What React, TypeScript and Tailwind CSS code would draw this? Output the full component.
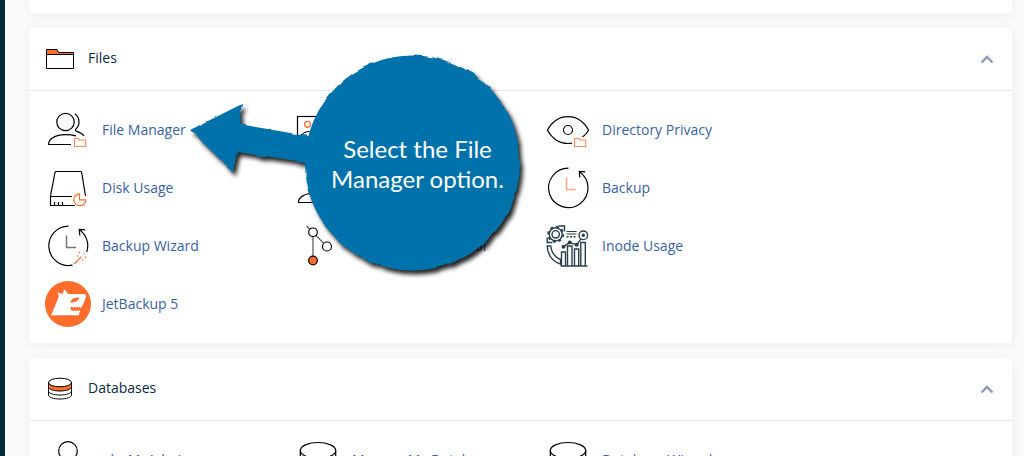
import { useState, type ComponentType, type ReactNode } from 'react';

interface Tool {
  label: string;
  icon: ComponentType;
}

interface SectionProps {
  title: string;
  icon: ReactNode;
  tools: Tool[];
}

function Glyph({ children }: { children: ReactNode }) {
  return (
    <svg viewBox="0 0 48 48" className="size-12 shrink-0" fill="none" stroke="#000" strokeWidth="1.2" aria-hidden="true">
      {children}
    </svg>
  );
}

const MINI_FOLDER = 'M30.5 32.5h4l1.2 1.5h6v6.5H30.5z';

function FileManagerIcon() {
  return (
    <Glyph>
      <circle cx="21.5" cy="16" r="8.7" />
      <path d="M27 38.5H4.7c-.5-5 5.8-9.8 16.8-9.8 4 0 7.5.4 10.5 1.2M31 7.8c5.2 4.2 5.2 11.2.8 15.4-.5.7-.3 1.6.5 1.9 3.5 1.2 6.2 2.8 7.7 4.7" />
      <path d={MINI_FOLDER} stroke="#ff8a57" />
    </Glyph>
  );
}

function ImagesIcon() {
  return (
    <Glyph>
      <rect x="3.5" y="10.5" width="40" height="28" />
      <circle cx="13.5" cy="18.3" r="3" stroke="#ff6c2c" />
      <path d="M4 32c4-4 7-6.500 10-6.500s6 3 9 6l7-8 13 9" />
    </Glyph>
  );
}

function DirectoryPrivacyIcon() {
  return (
    <Glyph>
      <path d="M28 37.200c-1.300.2-2.600.3-4 .3-8.500 0-16-5.500-20.600-13.300C8 16 15.500 10.700 24 10.700S40 16 44.600 24.200c-1.700 2.700-3.700 5-6 6.800" />
      <circle cx="24" cy="24" r="4.5" />
      <path d={MINI_FOLDER} stroke="#ff8a57" />
    </Glyph>
  );
}

function DiskUsageIcon() {
  return (
    <Glyph>
      <path d="M31 41.5H6.5V32L11 8.500q.3-1 1.200-1H36.500q1 0 1.200 1L41.500 32M6.500 32.500H28M10.500 38v3.500M14.500 38v3.500M18.500 38v3.500" />
      <path d="M35.5 29.800a6 6 0 1 0 6.300 6h-6.300z" stroke="#ff6c2c" />
    </Glyph>
  );
}

function FtpAccountsIcon() {
  return (
    <Glyph>
      <circle cx="24" cy="16" r="8.7" />
      <path d="M27 38.500H4.500c-.3-5 6-9.500 17-9.500 8 0 14 2.500 16.500 5.500" />
    </Glyph>
  );
}

function BackupIcon() {
  return (
    <Glyph>
      <path d="M24.500 4.200a19.700 19.700 0 1 0 11 3.500M35.800 13.500 35.300 7.500l6 .4" />
      <path d="M22.500 13.500V25.500H32" stroke="#ffa582" strokeWidth="1.5" />
    </Glyph>
  );
}

function BackupWizardIcon() {
  return (
    <Glyph>
      <path d="M24.500 4.200a19.700 19.700 0 1 0 4 39M42.700 30A19.700 19.700 0 0 0 35.500 7.700M35.800 13.500 35.300 7.500l6 .4" />
      <path d="M22.500 13.500V25.500H32" stroke="#777" strokeWidth="1.5" />
      <path d="m30.300 42 7-7.300" stroke="#ff6c2c" />
      <g fill="#ff6c2c" stroke="none">
        <circle cx="35.4" cy="30.5" r=".8" />
        <circle cx="40.3" cy="31.7" r=".8" />
        <circle cx="33.5" cy="34" r=".8" />
        <circle cx="41.7" cy="35" r=".8" />
        <circle cx="38.5" cy="38" r=".8" />
      </g>
    </Glyph>
  );
}

function GitIcon() {
  return (
    <Glyph>
      <path d="M12.500 4 33 24.700M19 10.500v28" stroke="#555" />
      <circle cx="19" cy="10.3" r="4.3" fill="#fff" />
      <circle cx="33" cy="24.5" r="4.5" fill="#fff" />
      <circle cx="19" cy="38.5" r="4.3" fill="#ff6c2c" />
    </Glyph>
  );
}

function InodeUsageIcon() {
  return (
    <Glyph>
      <g stroke="#2b3f4d" strokeWidth="1.4">
        <circle cx="11.7" cy="12.3" r="6.5" />
        <circle cx="11.7" cy="12.3" r="7.6" strokeWidth="1.8" strokeDasharray="2.9 3.07" />
        <circle cx="11.7" cy="12.3" r="3.7" />
        <path d="M14.500 4h6v5.500M3.200 15.500v5h5" />
        <path d="M3.200 24h3.600c.6 6.500 4 11 9.700 13.500v4.700C8.500 39.200 3.500 32.500 3.200 24z" />
        <path d="M17.500 44V30h4v14M23.500 44V24h4.500v20M30.500 44V27h4.200v17M36.800 44V20.500h4.500V44M16.500 44H43.500" />
        <path d="m19.500 24.700 6.200-4.200 7 2.300 4.300-6" />
        <circle cx="39.3" cy="13.3" r="4.3" />
        <path d="M22.500 9.500h10M22.500 12h10" strokeWidth="1.2" />
        <path d="M22.500 14.700h10" strokeDasharray="2 1.5" />
      </g>
      <g fill="#2b3f4d" stroke="none">
        <circle cx="19.5" cy="24.7" r="2" />
        <circle cx="25.7" cy="20.5" r="2" />
        <circle cx="32.7" cy="22.7" r="2" />
        <circle cx="39.3" cy="13.3" r="1.7" />
      </g>
    </Glyph>
  );
}

function JetBackupIcon() {
  return (
    <Glyph>
      <circle cx="24" cy="24" r="23" fill="#ff6c2c" stroke="none" />
      <g stroke="none">
        <path
          d="M7 35.500 14.300 18c.7-2 .2-3.500-.6-6 1.500 1.300 3 1.800 5.300 1.700l1-4.300c2 1 2.900 2.500 3.600 4.500H39c2.700 0 3.400 1.500 2.700 3.700-1.200 3.800-2.700 7.200-4.700 10.400l-1.200-1.600-1.400 1.500-1.300-1.500-1.300 1.500-1.300-1.500-1.300 1.300-1.400-1.300c-1.200.7-1.600 1.700-1.200 2.700.4 1.200 1.300 1.800 2.700 2l1.300-1.200 1.300 1.300 1.400-1.300 1.300 1.200 1.700-1.400-1.600 5.800c-8-.2-18-.2-27.700 0z"
          fill="#fff"
        />
        <path d="M26 22.500c1.200-3.400 4.500-5.200 9.300-5-.6 3.200-4 5-9.300 5z" fill="#ff6c2c" />
      </g>
    </Glyph>
  );
}

function PhpMyAdminIcon() {
  return (
    <Glyph>
      <circle cx="24" cy="15" r="9.3" />
      <path d="M6 40c1-7 8-11 18-11s17 4 18 11z" />
    </Glyph>
  );
}

function DatabaseIcon() {
  return (
    <Glyph>
      <ellipse cx="24" cy="14.5" rx="17.7" ry="8" />
      <path d="M6.300 14.500V36c0 4.500 8 8 17.700 8s17.700-3.500 17.700-8V14.500" />
    </Glyph>
  );
}

const FILE_TOOLS: Tool[] = [
  { label: 'File Manager', icon: FileManagerIcon },
  { label: 'Images', icon: ImagesIcon },
  { label: 'Directory Privacy', icon: DirectoryPrivacyIcon },
  { label: 'Disk Usage', icon: DiskUsageIcon },
  { label: 'FTP Accounts', icon: FtpAccountsIcon },
  { label: 'Backup', icon: BackupIcon },
  { label: 'Backup Wizard', icon: BackupWizardIcon },
  { label: 'Git™ Version Control', icon: GitIcon },
  { label: 'Inode Usage', icon: InodeUsageIcon },
  { label: 'JetBackup 5', icon: JetBackupIcon },
];

const DATABASE_TOOLS: Tool[] = [
  { label: 'phpMyAdmin', icon: PhpMyAdminIcon },
  { label: 'Manage My Databases', icon: DatabaseIcon },
  { label: 'Database Wizard', icon: DatabaseIcon },
];

function Section({ title, icon, tools }: SectionProps) {
  const [open, setOpen] = useState(true);

  return (
    <section className="rounded bg-white shadow-[0_2px_12px_rgba(0,0,0,0.06)]">
      <h2>
        <button
          type="button"
          aria-expanded={open}
          onClick={() => setOpen(!open)}
          className="flex h-[63px] w-full cursor-pointer items-center gap-[13px] border-b border-[#e3e6f2] px-4 text-left text-[#0c2a42]"
        >
          {icon}
          <span className="flex-1 pb-0.5">{title}</span>
          <svg viewBox="0 0 18 18" className={open ? 'size-[18px]' : 'size-[18px] rotate-180'} fill="none" stroke="#9097b6" strokeWidth="2.4" aria-hidden="true">
            <path d="m3.500 12.500 5.500-5.500 5.500 5.500" />
          </svg>
        </button>
      </h2>
      {open && (
        <ul className="grid grid-cols-[repeat(auto-fill,250px)] py-2.5 pl-[15px]">
          {tools.map(({ label, icon: Icon }) => (
            <li key={label}>
              <a href="#" className="flex h-[58px] items-center gap-2.5 text-[#3a5fa8] hover:underline">
                <Icon />
                {label}
              </a>
            </li>
          ))}
        </ul>
      )}
    </section>
  );
}

// Arrow and bubble laid over the panels, pointing at File Manager
function Callout() {
  return (
    <div className="pointer-events-none absolute top-[50px] left-[185px] h-[230px] w-[345px]">
      <svg viewBox="0 0 345 230" className="absolute inset-0 size-full" aria-hidden="true">
        <defs>
          <filter id="rough" x="-5%" y="-5%" width="112%" height="112%" colorInterpolationFilters="sRGB">
            <feTurbulence type="fractalNoise" baseFrequency="0.1" numOctaves="1" seed="4" />
            <feDisplacementMap in="SourceGraphic" scale="4" xChannelSelector="R" yChannelSelector="G" />
            <feGaussianBlur stdDeviation="0.4" result="edge" />
            <feDropShadow in="edge" dx="3" dy="4" stdDeviation="2" floodColor="#000" floodOpacity="0.85" />
          </filter>
        </defs>
        <g fill="#0072ab" filter="url(#rough)">
          <path d="M5 80 57 54l-3 20 80 14v26L52 102l-4 20z" />
          <circle cx="227.5" cy="113" r="107.5" />
        </g>
      </svg>
      <p className="absolute top-[84px] right-0 w-[225px] text-center font-['Lato','Open_Sans',sans-serif] text-2xl leading-[30px] text-white">
        Select the File
        <br />
        Manager option.
      </p>
    </div>
  );
}

export default function App() {
  return (
    <div className="relative flex h-screen overflow-hidden bg-[#fafafa] font-['Open_Sans','Noto_Sans',sans-serif] text-sm">
      <aside className="w-[5px] shrink-0 bg-[#03293a]" />
      <main className="flex min-w-0 flex-1 flex-col gap-[15px] pr-3 pl-6">
        <div className="h-[13px] shrink-0 rounded-b bg-white shadow-[0_2px_12px_rgba(0,0,0,0.06)]" />
        <Section
          title="Files"
          tools={FILE_TOOLS}
          icon={
            <svg viewBox="0 0 30 24" className="h-6 w-[30px]" fill="none" stroke="#000" aria-hidden="true">
              <path d="M1.500 7.500v-5h10.500l1.500 3h15v2z" fill="#ff6c2c" />
              <path d="M1.500 7.500h27v14h-27z" />
            </svg>
          }
        />
        <Section
          title="Databases"
          tools={DATABASE_TOOLS}
          icon={
            <svg viewBox="0 0 30 24" className="h-6 w-[30px]" fill="none" stroke="#000" aria-hidden="true">
              <path d="M3.500 6v12c0 2.300 5 4 11.500 4s11.500-1.700 11.500-4V6M3.500 14c0 2.300 5 4 11.500 4s11.500-1.700 11.500-4" />
              <path d="M3.500 5v5c0 2.300 5 4 11.500 4s11.500-1.700 11.500-4V5" fill="#ff6c2c" />
              <ellipse cx="15" cy="5.5" rx="11.5" ry="4.3" fill="#fff" />
            </svg>
          }
        />
      </main>
      <Callout />
    </div>
  );
}
